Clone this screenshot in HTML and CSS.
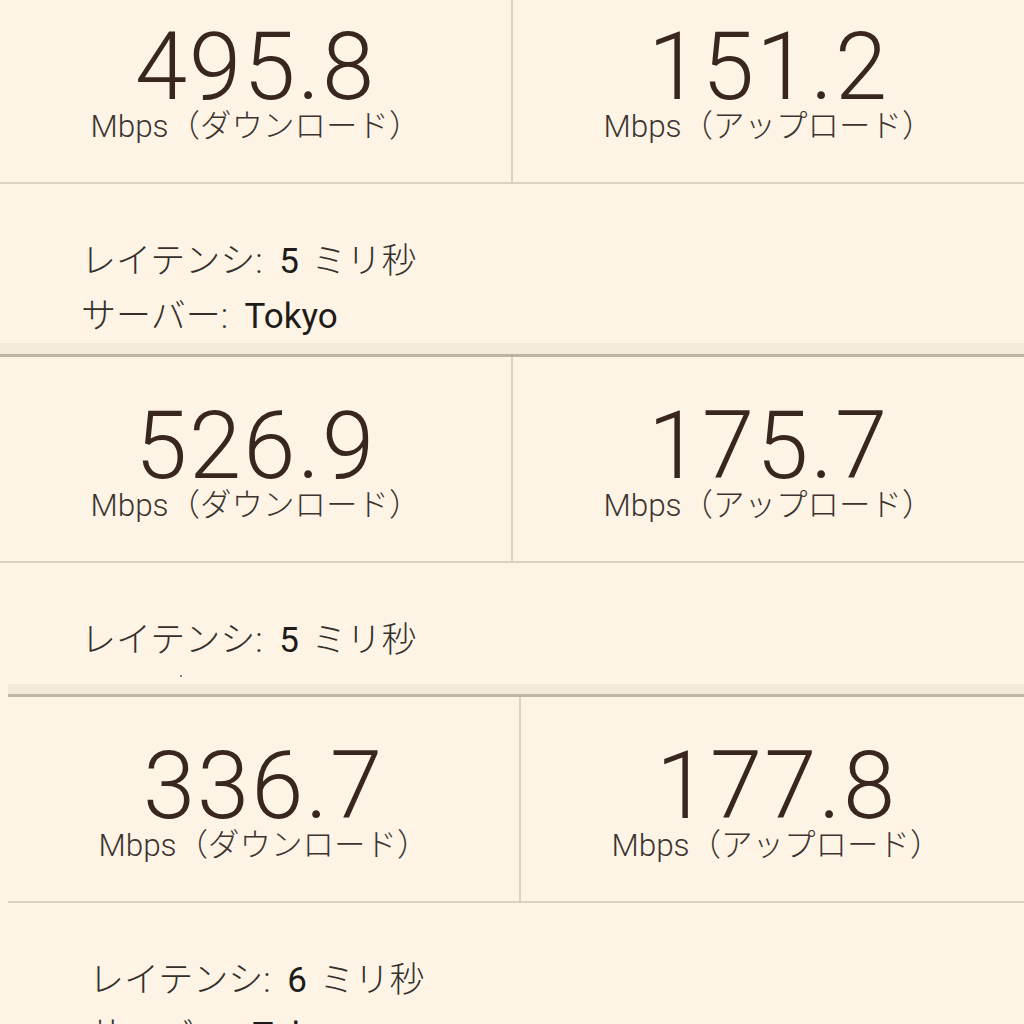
FILE: index.html
```html
<!DOCTYPE html>
<html lang="ja">
<head>
  <meta charset="UTF-8">
  <meta name="viewport" content="width=device-width, initial-scale=1.0">
  <title>スピードテスト結果</title>
  <link rel="stylesheet" href="styles.css">
</head>
<body>
  <div class="shot shot-first">
    <div class="result">
      <div class="speeds">
        <div class="speed">
          <div class="value">495.8</div>
          <div class="unit">Mbps（ダウンロード）</div>
        </div>
        <div class="speed">
          <div class="value">151.2</div>
          <div class="unit">Mbps（アップロード）</div>
        </div>
      </div>
      <div class="info">
        <p>レイテンシ: <span class="num">5</span> ミリ秒</p>
        <p>サーバー: <span class="num">Tokyo</span></p>
      </div>
    </div>
  </div>

  <div class="shot shot-second">
    <div class="result">
      <div class="band"></div>
      <div class="speeds">
        <div class="speed">
          <div class="value">526.9</div>
          <div class="unit">Mbps（ダウンロード）</div>
        </div>
        <div class="speed">
          <div class="value">175.7</div>
          <div class="unit">Mbps（アップロード）</div>
        </div>
      </div>
      <div class="info">
        <p>レイテンシ: <span class="num">5</span> ミリ秒</p>
        <span class="speck"></span>
      </div>
    </div>
  </div>

  <div class="shot shot-third">
    <div class="result">
      <div class="band"></div>
      <div class="speeds">
        <div class="speed">
          <div class="value">336.7</div>
          <div class="unit">Mbps（ダウンロード）</div>
        </div>
        <div class="speed">
          <div class="value">177.8</div>
          <div class="unit">Mbps（アップロード）</div>
        </div>
      </div>
      <div class="info">
        <p>レイテンシ: <span class="num">6</span> ミリ秒</p>
        <p>サーバー: <span class="num">Tokyo</span></p>
      </div>
    </div>
  </div>
</body>
</html>
```

FILE: styles.css
```css
body {
  margin: 0;
  padding: 0;
  background: #fdf4e6;
  font-family: Roboto, "Liberation Sans", "Noto Sans CJK JP", sans-serif;
  color: #3a2c27;
  height: 1024px;
  overflow: hidden;
}

.shot {
  overflow: hidden;
  background: #fdf4e6;
}

.shot-first {
  height: 343px;
}

.shot-second {
  height: 341px;
}

.shot-third {
  height: 340px;
}

.result {
  width: 1024px;
}

.shot-first .result {
  margin-top: -22px;
}

.shot-third .result {
  margin-left: 8px;
}

.band {
  height: 11px;
  background: #f3ead9;
  border-bottom: 3px solid #bdb4a3;
}

.shot-third .band {
  height: 10px;
}

.speeds {
  display: grid;
  grid-template-columns: 511px 511px;
  column-gap: 2px;
  background: #dcd2c0;
  border-bottom: 2px solid #dcd2c0;
}

.speed {
  background: #fdf4e6;
  height: 204px;
  text-align: center;
  box-sizing: border-box;
  padding-top: 42px;
}

.value {
  font-size: 94px;
  font-weight: 300;
  line-height: 94px;
  color: #38261f;
  letter-spacing: 2px;
}

.unit {
  font-size: 31.5px;
  font-weight: 300;
  line-height: 36px;
  margin-top: -5px;
  color: #3d3430;
}

.info {
  padding: 50px 0 0 81px;
}

.info p {
  margin: 0;
  font-size: 35px;
  line-height: 55px;
  font-weight: 300;
  color: #35302c;
}

.info .num {
  font-size: 35px;
  font-weight: 400;
  color: #1e1b19;
  margin: 0 4px 0 8px;
}

.speck {
  display: block;
  width: 2px;
  height: 2px;
  margin: 7px 0 0 99px;
  background: #8a807a;
}
```
